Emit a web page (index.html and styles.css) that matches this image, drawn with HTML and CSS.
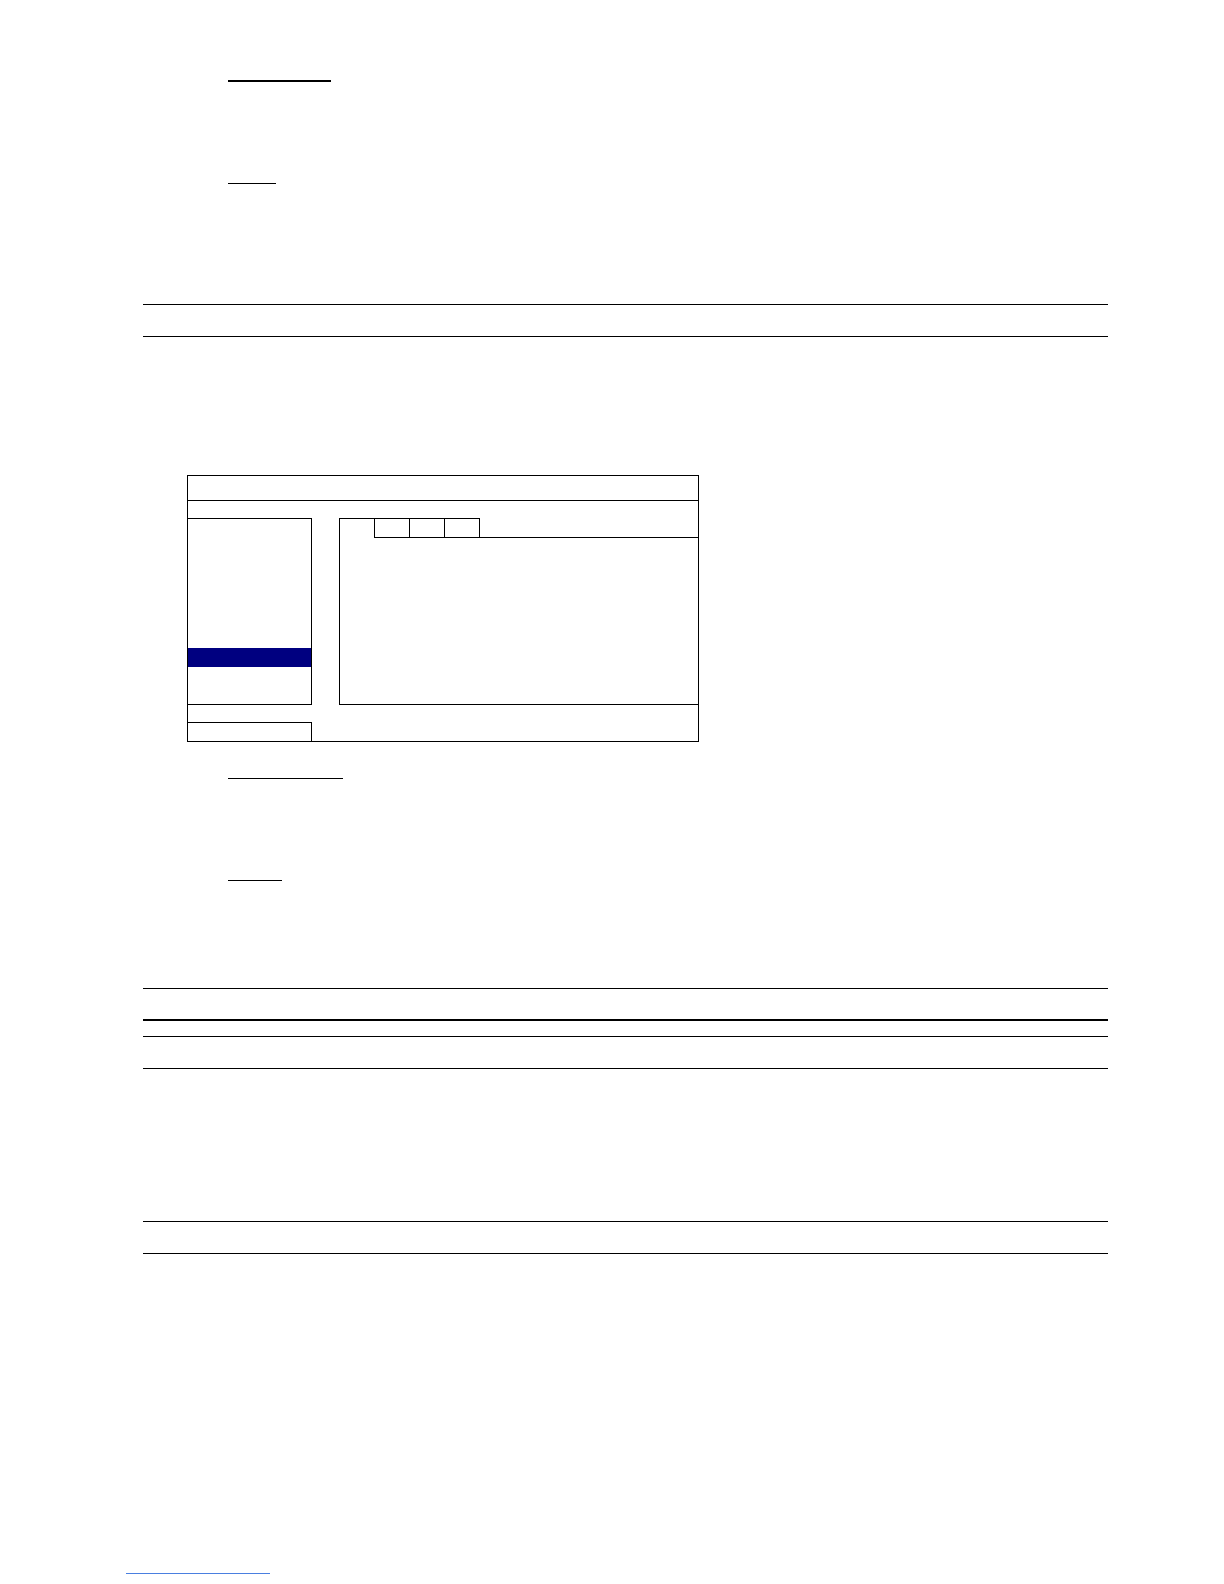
FILE: index.html
```html
<!DOCTYPE html>
<html lang="en">
<head>
<meta charset="utf-8">
<title>Manual page</title>
<link rel="stylesheet" href="styles.css">
</head>
<body>
<div class="page">
  <div class="uline uline-1"></div>
  <div class="uline uline-2"></div>

  <div class="rule rule-a"></div>
  <div class="rule rule-b"></div>

  <div class="dialog">
    <div class="dialog-title"></div>
    <div class="dialog-body">
      <div class="side-menu">
        <div class="menu-item"></div>
        <div class="menu-item"></div>
        <div class="menu-item"></div>
        <div class="menu-item"></div>
        <div class="menu-item"></div>
        <div class="menu-item"></div>
        <div class="menu-item active"></div>
      </div>
      <div class="content-panel">
        <div class="tab-row">
          <div class="tab-spacer"></div>
          <div class="tab tab-first"></div>
          <div class="tab"></div>
          <div class="tab tab-last"></div>
          <div class="tab-fill"></div>
        </div>
        <div class="content-area"></div>
      </div>
      <div class="footer-box"></div>
    </div>
  </div>

  <div class="uline uline-3"></div>
  <div class="uline uline-4"></div>

  <div class="rule rule-c"></div>
  <div class="rule rule-thick"></div>
  <div class="rule rule-d"></div>
  <div class="rule rule-e"></div>

  <div class="rule rule-f"></div>
  <div class="rule rule-g"></div>

  <div class="footnote-line"></div>
</div>
</body>
</html>
```

FILE: styles.css
```css
html, body {
  margin: 0;
  padding: 0;
  background: #ffffff;
  font-family: "Liberation Serif", "Times New Roman", serif;
}

.page {
  width: 1224px;
  height: 1584px;
  padding-top: 80px;
  box-sizing: border-box;
  overflow: hidden;
}

/* underlined headings */
.uline {
  margin-left: 228px;
  height: 0;
  border-top: 1px solid #000;
}
.uline-1 { width: 103px; border-top-width: 2px; }
.uline-2 { width: 48px; margin-top: 101px; }
.uline-3 { width: 115px; margin-top: 36px; }
.uline-4 { width: 54px; margin-top: 101px; }

/* table rules */
.rule {
  margin-left: 143px;
  width: 965px;
  height: 0;
  border-top: 1px solid #000;
}
.rule-a { margin-top: 120px; }
.rule-b { margin-top: 31px; }
.rule-c { margin-top: 107px; }
.rule-thick { margin-top: 30px; border-top-width: 2px; }
.rule-d { margin-top: 15px; }
.rule-e { margin-top: 31px; }
.rule-f { margin-top: 152px; }
.rule-g { margin-top: 31px; }

/* dialog screenshot */
.dialog {
  margin-top: 138px;
  margin-left: 187px;
  width: 512px;
  height: 267px;
  box-sizing: border-box;
  border: 1px solid #000;
  display: flex;
  flex-direction: column;
}
.dialog-title {
  height: 25px;
  box-sizing: border-box;
  border-bottom: 1px solid #000;
}
.dialog-body {
  flex: 1;
  display: grid;
  grid-template-columns: 124px 27px 1fr;
  grid-template-rows: 17px 187px 17px 19px;
}

.side-menu {
  grid-column: 1;
  grid-row: 2;
  box-sizing: border-box;
  border-top: 1px solid #000;
  border-right: 1px solid #000;
  border-bottom: 1px solid #000;
  padding-top: 3px;
  display: flex;
  flex-direction: column;
}
.menu-item {
  height: 21px;
  flex: 0 0 auto;
}
.menu-item.active {
  height: 19px;
  background: #000080;
}

.content-panel {
  grid-column: 3;
  grid-row: 2;
  box-sizing: border-box;
  border-left: 1px solid #000;
  border-bottom: 1px solid #000;
  display: flex;
  flex-direction: column;
}
.tab-row {
  display: flex;
  height: 20px;
}
.tab-row > div {
  box-sizing: border-box;
  height: 20px;
}
.tab-spacer {
  width: 34px;
  border-top: 1px solid #000;
}
.tab {
  width: 35px;
  border-top: 1px solid #000;
  border-right: 1px solid #000;
  border-bottom: 1px solid #000;
}
.tab-first {
  width: 36px;
  border-left: 1px solid #000;
}
.tab-last { width: 35px; }
.tab-fill {
  flex: 1;
  border-bottom: 1px solid #000;
}
.content-area { flex: 1; }

.footer-box {
  grid-column: 1;
  grid-row: 4;
  box-sizing: border-box;
  border-top: 1px solid #000;
  border-right: 1px solid #000;
}

.footnote-line {
  margin-top: 319px;
  margin-left: 126px;
  width: 144px;
  height: 0;
  border-top: 1px solid #4a7fe0;
}
```
